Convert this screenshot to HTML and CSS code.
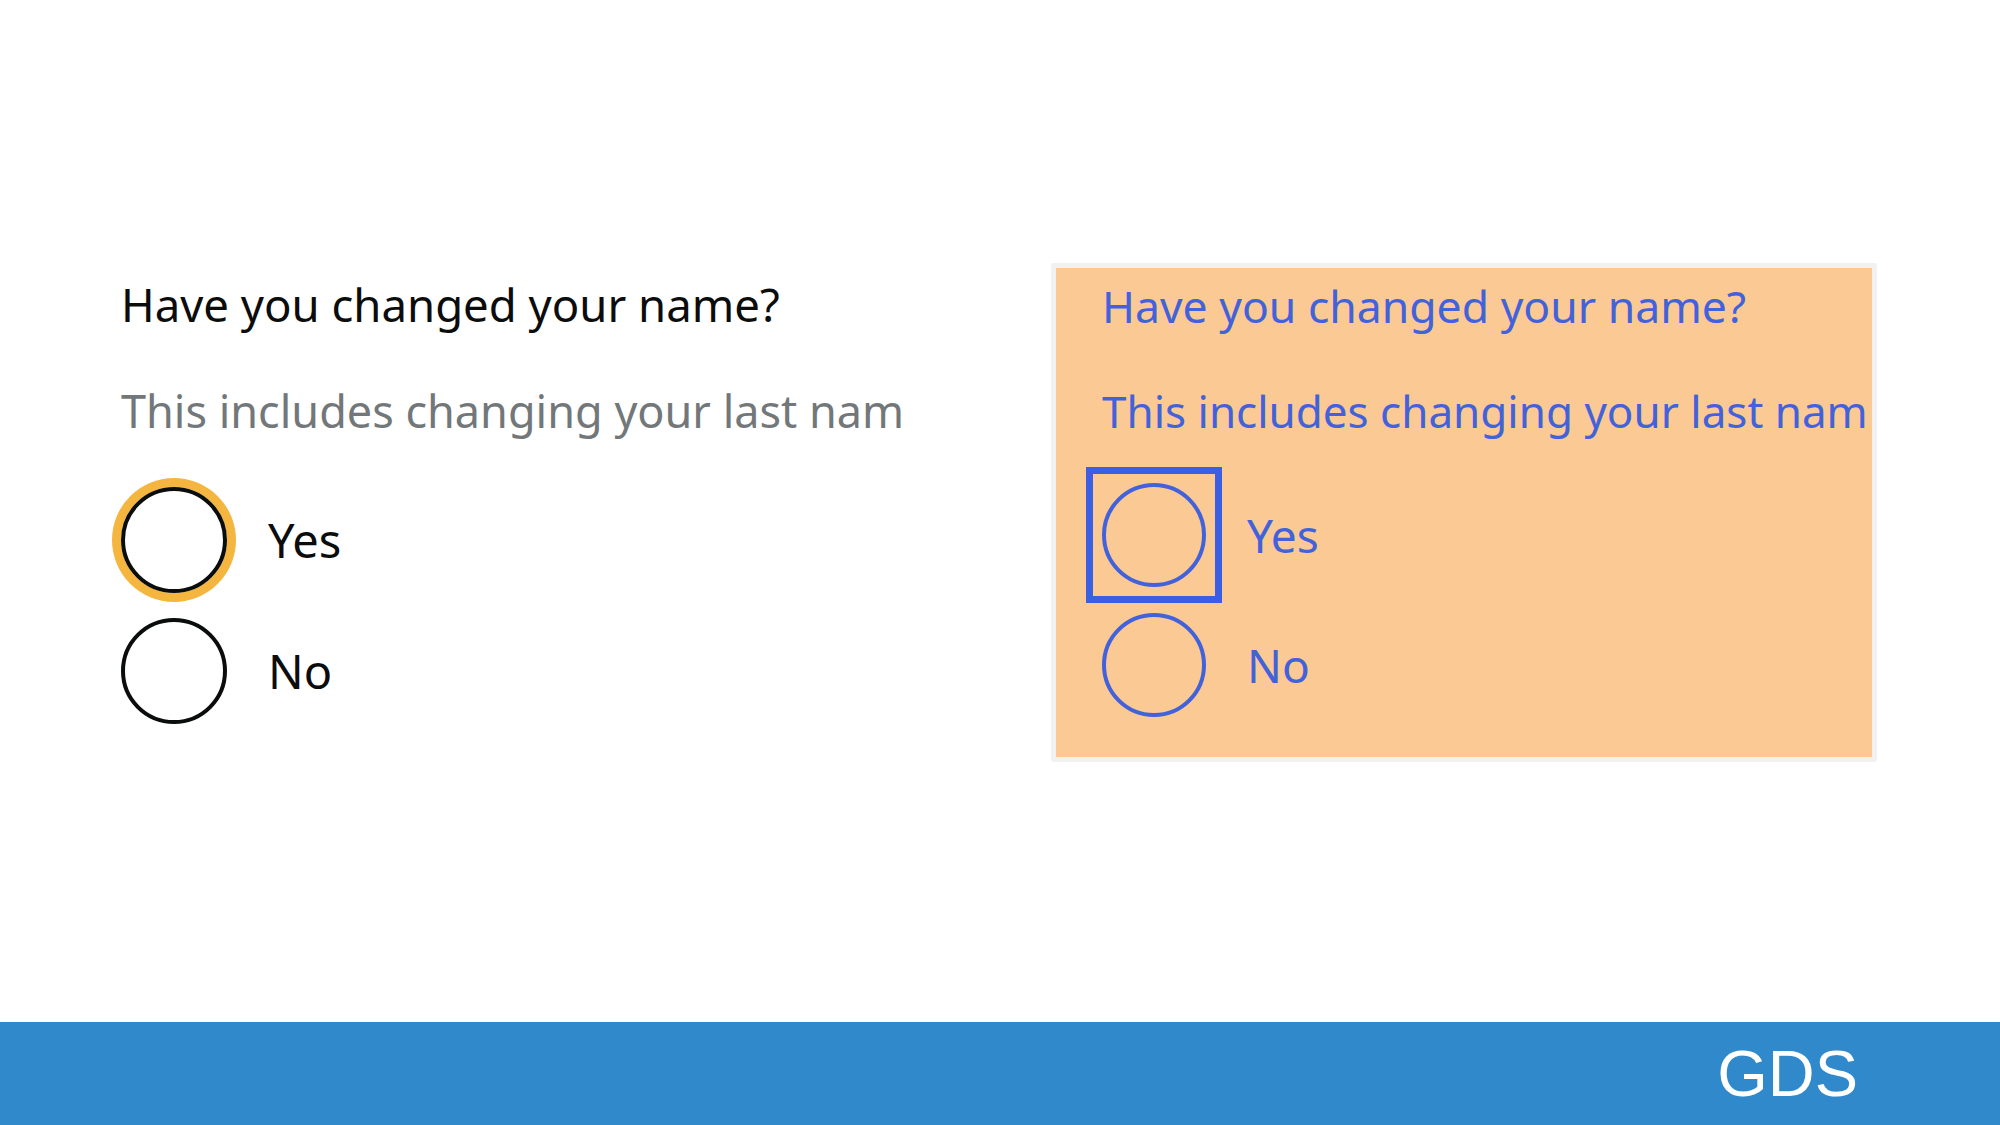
FILE: index.html
```html
<!DOCTYPE html>
<html lang="en">
<head>
<meta charset="utf-8">
<title>Have you changed your name?</title>
<link rel="stylesheet" href="styles.css">
</head>
<body>
<div class="slide">
  <main class="stage">
    <section class="panel panel--default">
      <h1 class="question">Have you changed your name?</h1>
      <p class="hint">This includes changing your last nam</p>
      <div class="radios">
        <label class="radio">
          <span class="radio__control radio__control--focus"></span>
          <span class="radio__label">Yes</span>
        </label>
        <label class="radio">
          <span class="radio__control"></span>
          <span class="radio__label">No</span>
        </label>
      </div>
    </section>
    <section class="frame">
      <div class="panel panel--contrast">
        <h1 class="question">Have you changed your name?</h1>
        <p class="hint">This includes changing your last nam</p>
        <div class="radios">
          <label class="radio">
            <span class="radio__focus"><span class="radio__control"></span></span>
            <span class="radio__label">Yes</span>
          </label>
          <label class="radio">
            <span class="radio__control"></span>
            <span class="radio__label">No</span>
          </label>
        </div>
      </div>
    </section>
  </main>
  <footer class="footer">
    <span class="footer__brand">GDS</span>
  </footer>
</div>
</body>
</html>
```

FILE: styles.css
```css
* { box-sizing: border-box; }

html, body {
  margin: 0;
  padding: 0;
  background: #ffffff;
}

.slide {
  width: 2000px;
  height: 1125px;
  display: flex;
  flex-direction: column;
  overflow: hidden;
}

.stage {
  height: 1022px;
  display: flex;
  align-items: flex-start;
  padding-top: 263px;
  padding-left: 121px;
}

.panel {
  font-family: "Noto Sans", "Open Sans", sans-serif;
  white-space: nowrap;
}

.question,
.hint {
  margin: 0;
  font-size: 45.5px;
  line-height: 60px;
  font-weight: 400;
}

.hint {
  font-size: 45px;
}

.radios {
  display: flex;
  flex-direction: column;
}

.radio {
  display: flex;
  align-items: center;
}

.radio__control {
  display: block;
  flex: none;
  border-radius: 50%;
  border-style: solid;
}

.radio__label {
  font-size: 47px;
  line-height: 60px;
}

/* default (left) panel */
.panel--default {
  width: 785px;
  padding-top: 11px;
  color: #0b0c0c;
}

.panel--default .hint {
  margin-top: 47px;
  color: #72777a;
}

.panel--default .radios {
  margin-top: 46px;
  gap: 25px;
}

.panel--default .radio {
  gap: 41px;
}

.panel--default .radio__control {
  width: 106px;
  height: 106px;
  border-width: 4px;
  border-color: #0b0c0c;
}

.panel--default .radio__control--focus {
  box-shadow: 0 0 0 9px #f4b63f;
}

/* contrast (right) panel */
.frame {
  margin-left: 145px;
  width: 826px;
  border: 5px solid #f1f1f1;
  border-radius: 3px;
}

.panel--contrast {
  background: #fbc993;
  color: #4262dc;
  padding: 8px 0 40px 46px;
}

.panel--contrast .question {
  font-size: 44.5px;
}

.panel--contrast .hint {
  font-size: 44px;
  margin-top: 45px;
}

.panel--contrast .radio__label {
  font-size: 46px;
}

.panel--contrast .radios {
  margin-top: 42px;
  gap: 26px;
}

.panel--contrast .radio {
  gap: 41px;
}

.panel--contrast .radio__control {
  width: 104px;
  height: 104px;
  border-width: 4px;
  border-color: #4262dc;
}

.radio__focus {
  display: block;
  flex: none;
  margin: -16px;
  padding: 9px;
  border: 7px solid #3a5fe3;
}

/* footer */
.footer {
  height: 103px;
  background: #2f89ca;
  display: flex;
  align-items: center;
  justify-content: flex-end;
  padding-right: 142px;
}

.footer__brand {
  font-family: "Liberation Sans", Arial, sans-serif;
  font-size: 65px;
  line-height: 1;
  color: #ffffff;
}
```
